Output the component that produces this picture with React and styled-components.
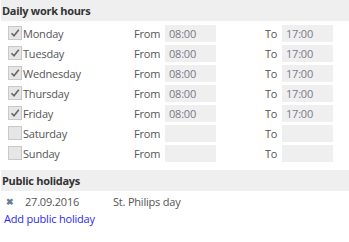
import React from "react";
import styled, { createGlobalStyle } from "styled-components";

const GlobalStyle = createGlobalStyle`
	body {
		margin: 0;
		background: #fff;
		font-family: "Open Sans", "Noto Sans", sans-serif;
		font-size: 11px;
		letter-spacing: -0.2px;
		color: #555;
	}
`;

const Container = styled.div`
	width: 349px;
	padding: 0 0 0 1px;
	box-sizing: border-box;
`;

const SectionTitle = styled.div`
	height: 21px;
	display: flex;
	align-items: center;
	padding-left: 1px;
	background-color: #efefef;
	font-weight: 700;
	font-size: 11px;
	letter-spacing: -0.3px;
	color: #333;
`;

const Days = styled.div`
	padding: 2px 0 7px 0;
`;

const DayRow = styled.div`
	height: 20px;
	display: grid;
	grid-template-columns: 133px 31px 100px 17px 52px;
	align-items: center;
`;

const DayLabel = styled.label`
	display: flex;
	align-items: center;
	padding-left: 7px;
`;

const Check = styled.span`
	width: 12px;
	height: 12px;
	border: 1px solid #c8c8c8;
	background-color: #e6e6e6;
	margin-right: 1px;
	display: flex;
	align-items: center;
	justify-content: center;
`;

const FieldLabel = styled.span``;

const TimeBox = styled.div`
	width: 51px;
	height: 17px;
	background-color: #efefef;
	color: #7a7a88;
	padding-left: 4px;
	box-sizing: border-box;
	display: flex;
	align-items: center;
`;

const HolidayRow = styled.div`
	height: 19px;
	margin-top: 1px;
	display: grid;
	grid-template-columns: 19px 88px 1fr;
	align-items: center;
	padding-left: 5px;
`;

const Remove = styled.span`
	color: #6a7b94;
	font-size: 9px;
	font-weight: 700;
`;

const AddLink = styled.a`
	display: block;
	padding-left: 3px;
	color: #2b2bef;
	text-decoration: none;
	line-height: 16px;
`;

const days = [
	{ name: "Monday", on: true },
	{ name: "Tuesday", on: true },
	{ name: "Wednesday", on: true },
	{ name: "Thursday", on: true },
	{ name: "Friday", on: true },
	{ name: "Saturday", on: false },
	{ name: "Sunday", on: false },
];

const CheckMark = () => (
	<svg width="10" height="10" viewBox="0 0 10 10">
		<path d="M1.5 5.2 L4 7.8 L8.8 1.8" stroke="#666" strokeWidth="1.6" fill="none" />
	</svg>
);

const App = () => {
	return (
		<Container>
			<GlobalStyle />
			<SectionTitle>Daily work hours</SectionTitle>
			<Days>
				{days.map((d) => (
					<DayRow key={d.name}>
						<DayLabel>
							<Check>{d.on && <CheckMark />}</Check>
							{d.name}
						</DayLabel>
						<FieldLabel>From</FieldLabel>
						<TimeBox>{d.on ? "08:00" : ""}</TimeBox>
						<FieldLabel>To</FieldLabel>
						<TimeBox>{d.on ? "17:00" : ""}</TimeBox>
					</DayRow>
				))}
			</Days>
			<SectionTitle>Public holidays</SectionTitle>
			<HolidayRow>
				<Remove>✖</Remove>
				<span>27.09.2016</span>
				<span>St. Philips day</span>
			</HolidayRow>
			<AddLink href="#">Add public holiday</AddLink>
		</Container>
	);
};

export default App;
